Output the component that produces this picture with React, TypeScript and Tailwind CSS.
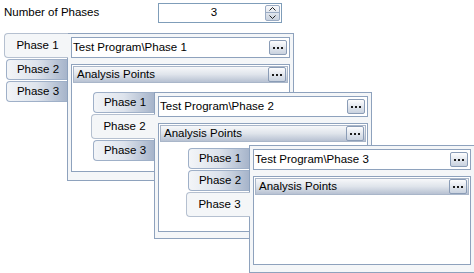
import React from "react";

const font = { fontFamily: '"Liberation Sans", Arial, sans-serif' };

function DotsButton() {
  return (
    <div className="flex h-[15px] w-[18px] items-center justify-center gap-[2px] rounded-[2px] border border-[#8a9cb6] bg-gradient-to-b from-[#fdfdfe] to-[#c9d2df]">
      <span className="h-[2px] w-[2px] bg-[#1b1b1b]" />
      <span className="h-[2px] w-[2px] bg-[#1b1b1b]" />
      <span className="h-[2px] w-[2px] bg-[#1b1b1b]" />
    </div>
  );
}

function Tab({ label, selected }: { label: string; selected: boolean }) {
  if (selected) {
    return (
      <div className="relative z-10 -mr-[1px] flex h-[25px] items-center justify-center rounded-l-[4px] border border-r-0 border-[#b5c0d0] bg-[#f4f6f8] pl-[2px] text-[11.5px] text-black">
        {label}
      </div>
    );
  }
  return (
    <div className="ml-[2px] flex h-[21px] items-center justify-center rounded-l-[4px] border border-r-0 border-[#9fb0c8] bg-gradient-to-r from-[#f3f5f8] via-[#dde3ec] to-[#a6b4ca] pl-[2px] text-[11.5px] text-black">
      {label}
    </div>
  );
}

function PhaseControl({
  left,
  top,
  tabsTop,
  selected,
  width,
  height,
  groupHeight,
  n,
}: {
  left: number;
  top: number;
  tabsTop: number;
  selected: number;
  width: number;
  height: number;
  groupHeight: number;
  n: number;
}) {
  return (
    <div className="absolute flex" style={{ left, top }}>
      <div className="flex w-[63px] flex-col gap-[1px]" style={{ paddingTop: tabsTop }}>
        {[1, 2, 3].map((i) => (
          <Tab key={i} label={`Phase ${i}`} selected={i === selected} />
        ))}
      </div>
      <div
        className="flex flex-col border border-[#8ea2bd] bg-[#f4f6f8] px-[3px] pt-[3px]"
        style={{ width, height }}
      >
        <div className="flex h-[21px] items-center justify-between border border-[#8ea2bd] bg-white pl-[1px] pr-[2px] text-[11.5px] text-black">
          <span>Test Program\Phase {n}</span>
          <DotsButton />
        </div>
        <div
          className="mt-[6px] flex flex-col border border-[#8ea2bd] bg-white p-[1px]"
          style={{ height: groupHeight }}
        >
          <div className="flex h-[17px] items-center justify-between border border-[#a9b6c9] bg-gradient-to-b from-[#f7f8fa] via-[#dfe4eb] to-[#b7c1d2] pl-[3px] pr-[1px] text-[11.5px] text-black">
            <span>Analysis Points</span>
            <DotsButton />
          </div>
        </div>
      </div>
    </div>
  );
}

export default function App() {
  return (
    <div className="relative h-[273px] w-[474px] overflow-hidden bg-white" style={font}>
      <div className="flex items-center pt-[3px]">
        <span className="ml-[4px] w-[154px] text-[11.5px] text-black">Number of Phases</span>
        <div className="flex h-[20px] w-[124px] items-center border border-[#7f9db9] bg-white pr-[1px]">
          <span className="flex-1 pl-[4px] text-center text-[11.5px] text-black">3</span>
          <div className="flex h-[16px] w-[15px] flex-col overflow-hidden rounded-[2px] border border-[#9aabc3] bg-gradient-to-b from-[#f8f9fb] to-[#c8d1de]">
            <div className="flex h-[7px] items-center justify-center border-b border-[#9aabc3]">
              <svg width="7" height="4" viewBox="0 0 7 4">
                <path d="M0.5 3.5 L3.5 0.5 L6.5 3.5" stroke="#222" fill="none" />
              </svg>
            </div>
            <div className="flex flex-1 items-center justify-center">
              <svg width="7" height="4" viewBox="0 0 7 4">
                <path d="M0.5 0.5 L3.5 3.5 L6.5 0.5" stroke="#222" fill="none" />
              </svg>
            </div>
          </div>
        </div>
      </div>

      <PhaseControl left={4} top={33} tabsTop={0} selected={1} width={227} height={148} groupHeight={108} n={1} />
      <PhaseControl left={91} top={92} tabsTop={0} selected={2} width={218} height={147} groupHeight={109} n={2} />
      <PhaseControl left={186} top={145} tabsTop={3} selected={3} width={226} height={128} groupHeight={89} n={3} />
    </div>
  );
}
